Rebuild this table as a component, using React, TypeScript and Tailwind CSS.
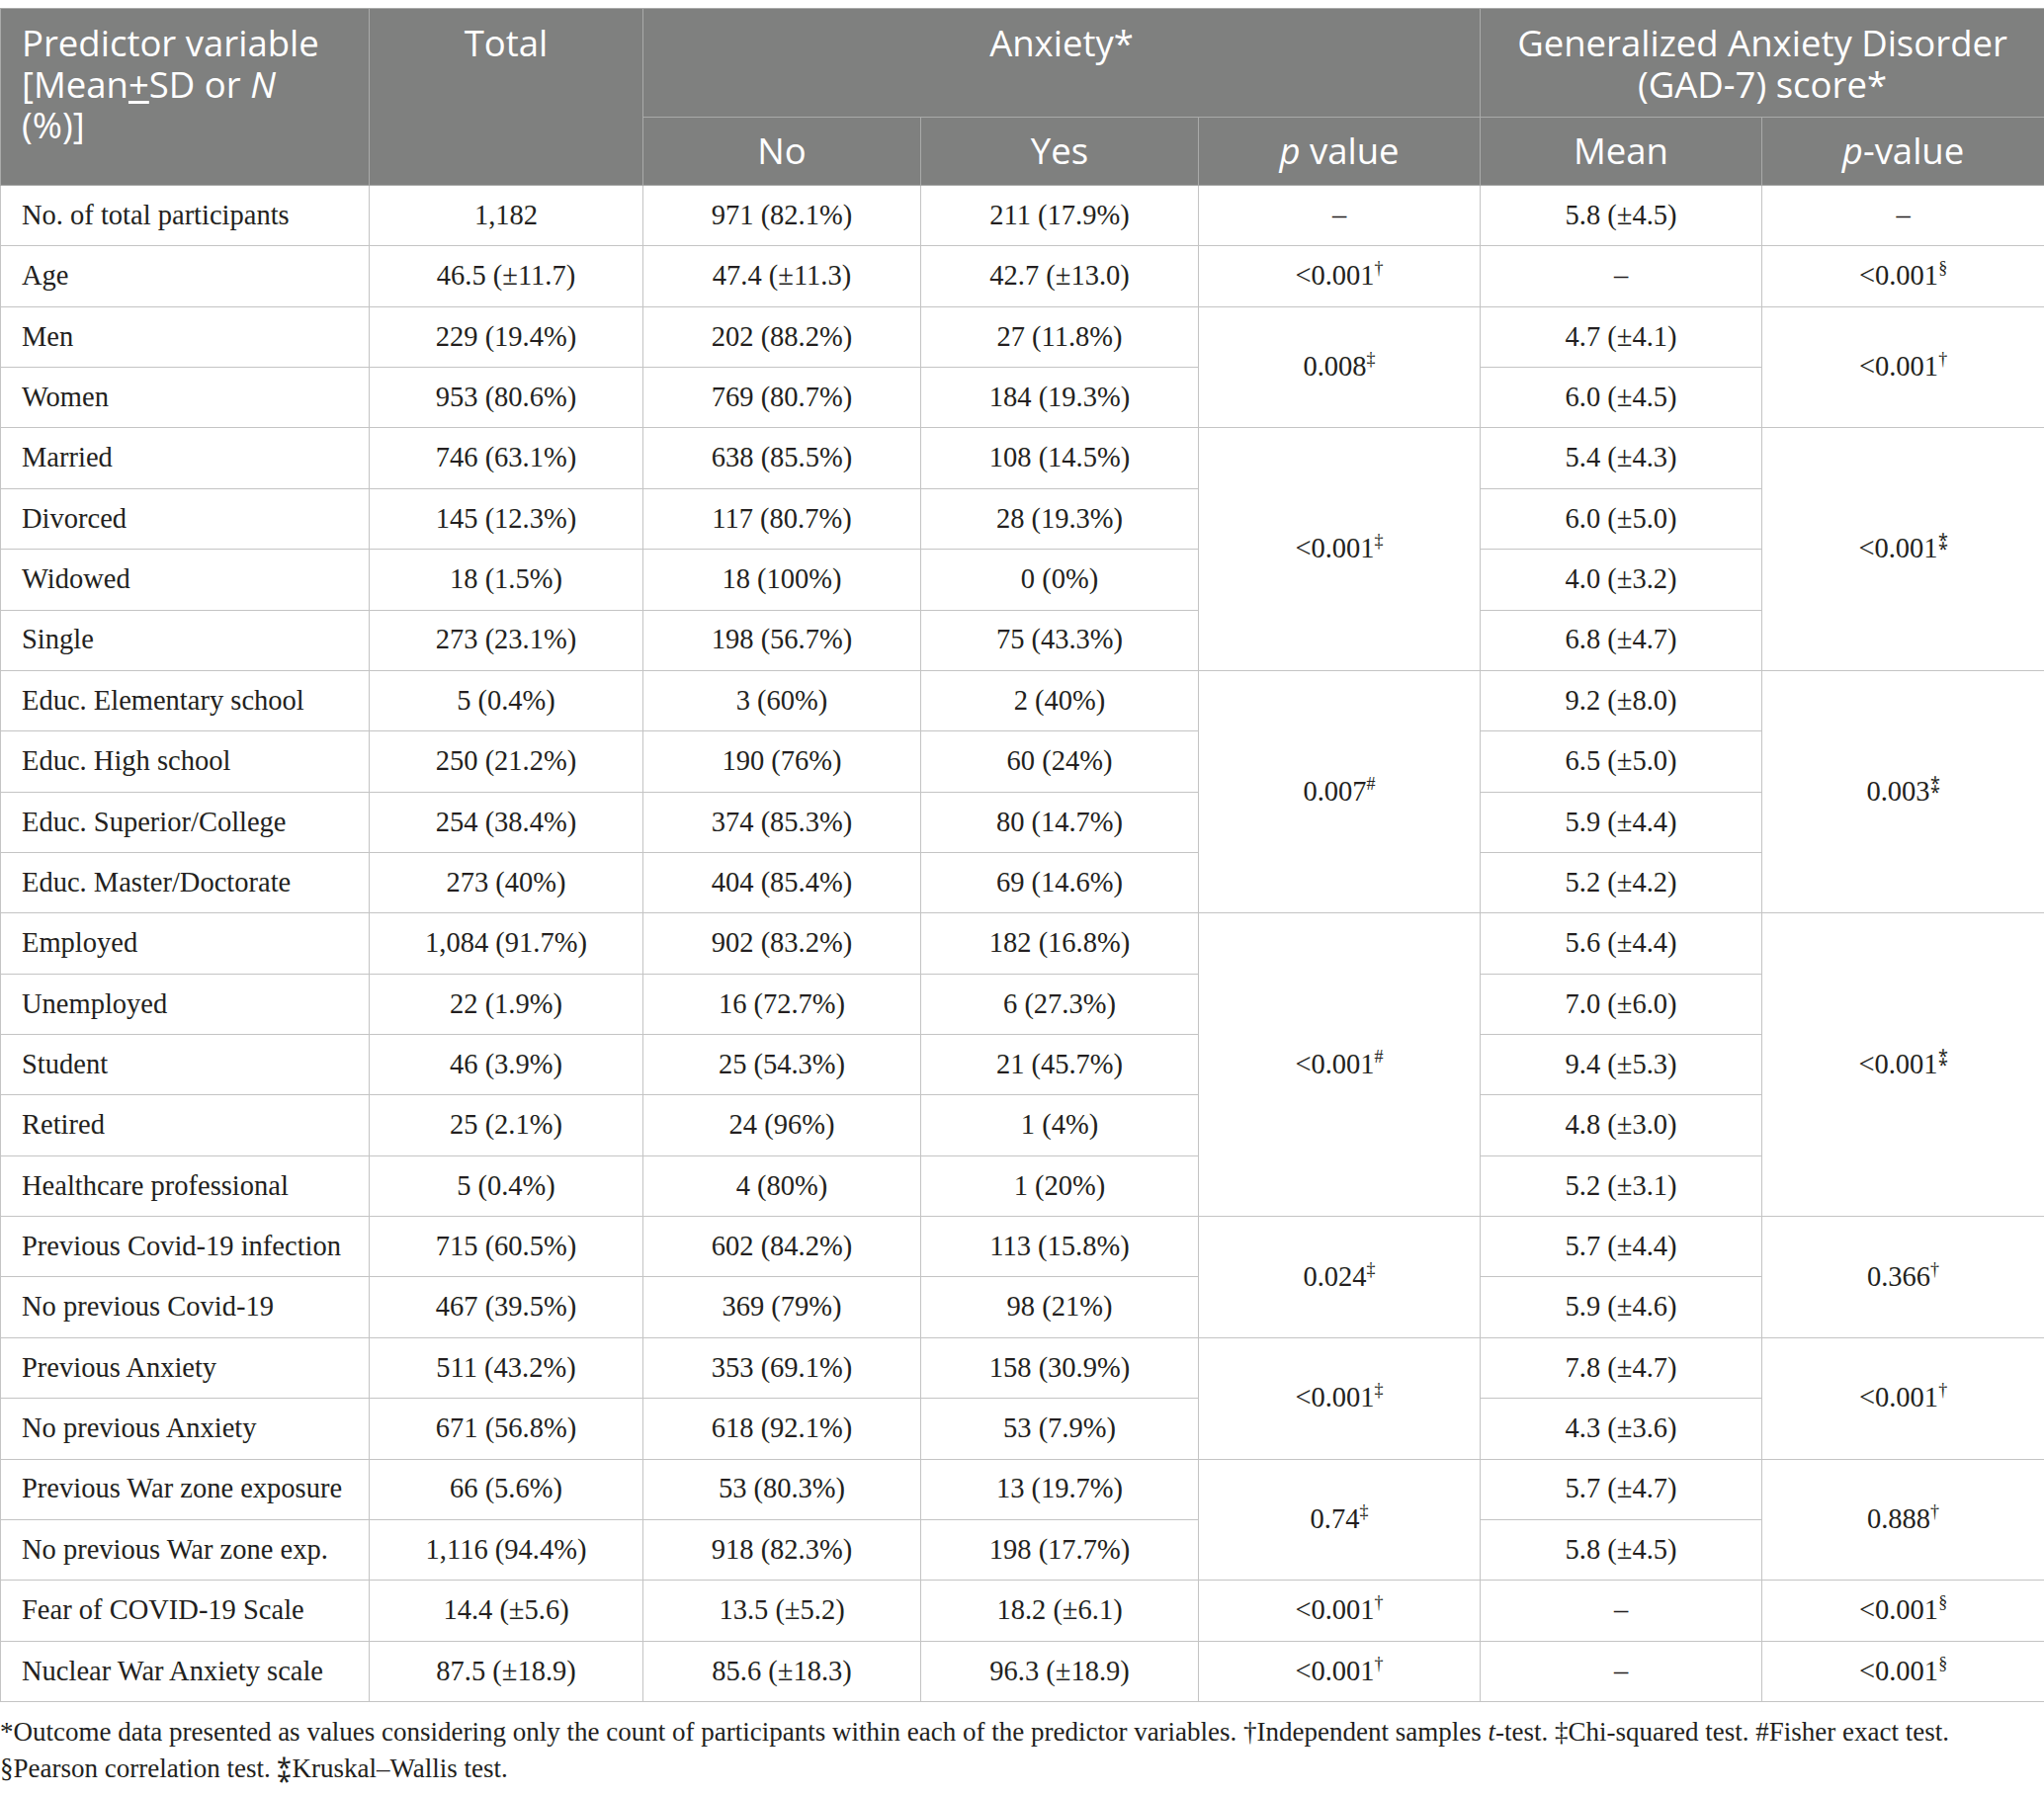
import React from 'react';

type Sup = '†' | '‡' | '§' | '#' | '⁑' | '';

interface PValue {
  text: string;
  sup: Sup;
}

interface Row {
  label: string;
  total: string;
  no: string;
  yes: string;
  mean: string;
}

interface Group {
  rows: Row[];
  pAnx: PValue;
  pGad: PValue;
}

const groups: Group[] = [
  {
    rows: [{ label: 'No. of total participants', total: '1,182', no: '971 (82.1%)', yes: '211 (17.9%)', mean: '5.8 (±4.5)' }],
    pAnx: { text: '–', sup: '' },
    pGad: { text: '–', sup: '' },
  },
  {
    rows: [{ label: 'Age', total: '46.5 (±11.7)', no: '47.4 (±11.3)', yes: '42.7 (±13.0)', mean: '–' }],
    pAnx: { text: '<0.001', sup: '†' },
    pGad: { text: '<0.001', sup: '§' },
  },
  {
    rows: [
      { label: 'Men', total: '229 (19.4%)', no: '202 (88.2%)', yes: '27 (11.8%)', mean: '4.7 (±4.1)' },
      { label: 'Women', total: '953 (80.6%)', no: '769 (80.7%)', yes: '184 (19.3%)', mean: '6.0 (±4.5)' },
    ],
    pAnx: { text: '0.008', sup: '‡' },
    pGad: { text: '<0.001', sup: '†' },
  },
  {
    rows: [
      { label: 'Married', total: '746 (63.1%)', no: '638 (85.5%)', yes: '108 (14.5%)', mean: '5.4 (±4.3)' },
      { label: 'Divorced', total: '145 (12.3%)', no: '117 (80.7%)', yes: '28 (19.3%)', mean: '6.0 (±5.0)' },
      { label: 'Widowed', total: '18 (1.5%)', no: '18 (100%)', yes: '0 (0%)', mean: '4.0 (±3.2)' },
      { label: 'Single', total: '273 (23.1%)', no: '198 (56.7%)', yes: '75 (43.3%)', mean: '6.8 (±4.7)' },
    ],
    pAnx: { text: '<0.001', sup: '‡' },
    pGad: { text: '<0.001', sup: '⁑' },
  },
  {
    rows: [
      { label: 'Educ. Elementary school', total: '5 (0.4%)', no: '3 (60%)', yes: '2 (40%)', mean: '9.2 (±8.0)' },
      { label: 'Educ. High school', total: '250 (21.2%)', no: '190 (76%)', yes: '60 (24%)', mean: '6.5 (±5.0)' },
      { label: 'Educ. Superior/College', total: '254 (38.4%)', no: '374 (85.3%)', yes: '80 (14.7%)', mean: '5.9 (±4.4)' },
      { label: 'Educ. Master/Doctorate', total: '273 (40%)', no: '404 (85.4%)', yes: '69 (14.6%)', mean: '5.2 (±4.2)' },
    ],
    pAnx: { text: '0.007', sup: '#' },
    pGad: { text: '0.003', sup: '⁑' },
  },
  {
    rows: [
      { label: 'Employed', total: '1,084 (91.7%)', no: '902 (83.2%)', yes: '182 (16.8%)', mean: '5.6 (±4.4)' },
      { label: 'Unemployed', total: '22 (1.9%)', no: '16 (72.7%)', yes: '6 (27.3%)', mean: '7.0 (±6.0)' },
      { label: 'Student', total: '46 (3.9%)', no: '25 (54.3%)', yes: '21 (45.7%)', mean: '9.4 (±5.3)' },
      { label: 'Retired', total: '25 (2.1%)', no: '24 (96%)', yes: '1 (4%)', mean: '4.8 (±3.0)' },
      { label: 'Healthcare professional', total: '5 (0.4%)', no: '4 (80%)', yes: '1 (20%)', mean: '5.2 (±3.1)' },
    ],
    pAnx: { text: '<0.001', sup: '#' },
    pGad: { text: '<0.001', sup: '⁑' },
  },
  {
    rows: [
      { label: 'Previous Covid-19 infection', total: '715 (60.5%)', no: '602 (84.2%)', yes: '113 (15.8%)', mean: '5.7 (±4.4)' },
      { label: 'No previous Covid-19', total: '467 (39.5%)', no: '369 (79%)', yes: '98 (21%)', mean: '5.9 (±4.6)' },
    ],
    pAnx: { text: '0.024', sup: '‡' },
    pGad: { text: '0.366', sup: '†' },
  },
  {
    rows: [
      { label: 'Previous Anxiety', total: '511 (43.2%)', no: '353 (69.1%)', yes: '158 (30.9%)', mean: '7.8 (±4.7)' },
      { label: 'No previous Anxiety', total: '671 (56.8%)', no: '618 (92.1%)', yes: '53 (7.9%)', mean: '4.3 (±3.6)' },
    ],
    pAnx: { text: '<0.001', sup: '‡' },
    pGad: { text: '<0.001', sup: '†' },
  },
  {
    rows: [
      { label: 'Previous War zone exposure', total: '66 (5.6%)', no: '53 (80.3%)', yes: '13 (19.7%)', mean: '5.7 (±4.7)' },
      { label: 'No previous War zone exp.', total: '1,116 (94.4%)', no: '918 (82.3%)', yes: '198 (17.7%)', mean: '5.8 (±4.5)' },
    ],
    pAnx: { text: '0.74', sup: '‡' },
    pGad: { text: '0.888', sup: '†' },
  },
  {
    rows: [{ label: 'Fear of COVID-19 Scale', total: '14.4 (±5.6)', no: '13.5 (±5.2)', yes: '18.2 (±6.1)', mean: '–' }],
    pAnx: { text: '<0.001', sup: '†' },
    pGad: { text: '<0.001', sup: '§' },
  },
  {
    rows: [{ label: 'Nuclear War Anxiety scale', total: '87.5 (±18.9)', no: '85.6 (±18.3)', yes: '96.3 (±18.9)', mean: '–' }],
    pAnx: { text: '<0.001', sup: '†' },
    pGad: { text: '<0.001', sup: '§' },
  },
];

const headCell = 'border border-[#a9aaa9] bg-[#7f807f] px-[21px] font-normal text-white';
const bodyCell = 'border border-[#c4c4c4] px-[21px] align-middle';

const PCell = ({ p, span }: { p: PValue; span: number }) => (
  <td rowSpan={span} className={`${bodyCell} text-center`}>
    {p.text}
    {p.sup && <sup className="relative -top-[11px] text-[18px]">{p.sup}</sup>}
  </td>
);

export default function App() {
  return (
    <div className="w-[2068px] bg-white pt-[8px] text-[#231f20]">
      <table
        className="w-[2068px] table-fixed border-collapse text-[28.5px] leading-none"
        style={{ fontFamily: '"Liberation Serif", "Times New Roman", serif' }}
      >
        <colgroup>
          <col className="w-[373px]" />
          <col className="w-[277px]" />
          <col className="w-[281px]" />
          <col className="w-[281px]" />
          <col className="w-[285px]" />
          <col className="w-[285px]" />
          <col className="w-[286px]" />
        </colgroup>
        <thead className="text-[36.5px] leading-[41.5px]" style={{ fontFamily: '"Open Sans", "Noto Sans", sans-serif' }}>
          <tr className="h-[110px]">
            <th rowSpan={2} className={`${headCell} pt-[14px] text-left align-top`}>
              Predictor variable
              <br />
              [Mean<span className="underline underline-offset-[3px]">+</span>SD or <i>N</i>
              <br />
              (%)]
            </th>
            <th rowSpan={2} className={`${headCell} pt-[14px] text-center align-top`}>
              Total
            </th>
            <th colSpan={3} className={`${headCell} pt-[14px] text-center align-top`}>
              Anxiety*
            </th>
            <th colSpan={2} className={`${headCell} pt-[14px] text-center align-top`}>
              Generalized Anxiety Disorder
              <br />
              (GAD-7) score*
            </th>
          </tr>
          <tr className="h-[69px]">
            <th className={`${headCell} text-center align-middle`}>No</th>
            <th className={`${headCell} text-center align-middle`}>Yes</th>
            <th className={`${headCell} text-center align-middle`}>
              <i>p</i> value
            </th>
            <th className={`${headCell} text-center align-middle`}>Mean</th>
            <th className={`${headCell} text-center align-middle`}>
              <i>p</i>-value
            </th>
          </tr>
        </thead>
        <tbody>
          {groups.map((g) =>
            g.rows.map((r, i) => (
              <tr key={r.label} className="h-[61.36px]">
                <td className={`${bodyCell} text-left`}>{r.label}</td>
                <td className={`${bodyCell} text-center`}>{r.total}</td>
                <td className={`${bodyCell} text-center`}>{r.no}</td>
                <td className={`${bodyCell} text-center`}>{r.yes}</td>
                {i === 0 && <PCell p={g.pAnx} span={g.rows.length} />}
                <td className={`${bodyCell} text-center`}>{r.mean}</td>
                {i === 0 && <PCell p={g.pGad} span={g.rows.length} />}
              </tr>
            ))
          )}
        </tbody>
      </table>
      <div
        className="pt-[12px] text-[27px] leading-[37px]"
        style={{ fontFamily: '"Liberation Serif", "Times New Roman", serif' }}
      >
        <p>
          *Outcome data presented as values considering only the count of participants within each of the predictor
          variables. †Independent samples <i>t</i>-test. ‡Chi-squared test. #Fisher exact test.
        </p>
        <p>§Pearson correlation test. ⁑Kruskal–Wallis test.</p>
      </div>
    </div>
  );
}
